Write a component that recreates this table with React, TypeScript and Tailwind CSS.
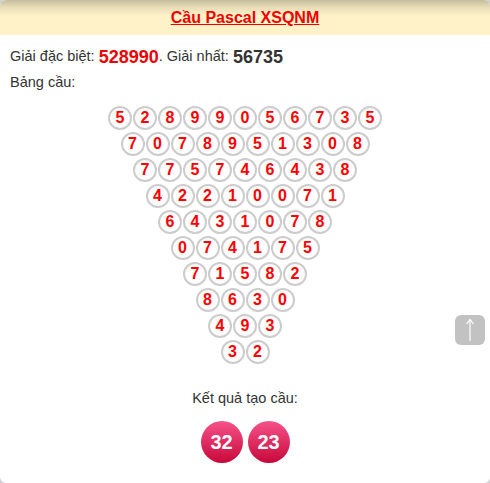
import React from "react";

const first = [5, 2, 8, 9, 9, 0, 5, 6, 7, 3, 5];

function buildRows(): number[][] {
  const rows: number[][] = [first];
  while (rows[rows.length - 1].length > 2) {
    const p = rows[rows.length - 1];
    const n: number[] = [];
    for (let i = 0; i < p.length - 1; i++) n.push((p[i] + p[i + 1]) % 10);
    rows.push(n);
  }
  return rows;
}

export default function App() {
  const rows = buildRows();
  return (
    <div
      className="w-[490px] h-[483px] bg-[#cfcfd4] overflow-hidden"
      style={{ fontFamily: '"Liberation Sans", Arial, sans-serif' }}
    >
      <div className="relative w-full h-full bg-white rounded-[6px] overflow-hidden">
        <div className="h-[35px] flex items-center justify-center bg-[linear-gradient(to_bottom,#c4bc9c_0px,#e6dcb6_7px,#fff2c9_16px,#fff2c9_35px)]">
          <a className="text-[16px] font-bold text-[#ee0000] underline leading-none mt-[1px]">
            Cầu Pascal XSQNM
          </a>
        </div>
        <div className="px-[10px] pt-[10px] text-[14.5px] text-[#333]">
          <div className="h-[24px] flex items-center">
            <span>Giải đặc biệt:&nbsp;</span>
            <span className="text-[18px] font-bold text-[#ee0000]">528990</span>
            <span>. Giải nhất:&nbsp;</span>
            <span className="text-[18px] font-bold text-[#333]">56735</span>
          </div>
          <div className="h-[24px] flex items-center mt-[2px]">Bảng cầu:</div>
        </div>
        <div className="mt-[11px] flex flex-col items-center gap-[2px]">
          {rows.map((r, i) => (
            <div key={i} className="flex gap-[1px]">
              {r.map((v, j) => (
                <div
                  key={j}
                  className="w-[24px] h-[24px] rounded-full border-2 border-[#cccccc] flex items-center justify-center text-[16px] font-bold text-[#ff0000] leading-none"
                >
                  {v}
                </div>
              ))}
            </div>
          ))}
        </div>
        <div className="mt-[24px] text-center text-[14.5px] text-[#333] leading-[20px]">
          Kết quả tạo cầu:
        </div>
        <div className="mt-[13px] flex justify-center gap-[5px]">
          {["32", "23"].map((t) => (
            <div
              key={t}
              className="w-[42px] h-[42px] rounded-full bg-[linear-gradient(to_bottom,#f5528a,#c8083a)] flex items-center justify-center text-white text-[20px] font-bold leading-none"
            >
              {t}
            </div>
          ))}
        </div>
        <div className="absolute left-[455px] top-[315px] w-[30px] h-[30px] rounded-[6px] bg-[#c2c2c2] flex items-center justify-center">
          <svg width="14" height="24" viewBox="0 0 14 24" fill="none">
            <path d="M7 23V2M3.5 6L7 1.5L10.5 6" stroke="white" strokeWidth="1.2" />
          </svg>
        </div>
      </div>
    </div>
  );
}
